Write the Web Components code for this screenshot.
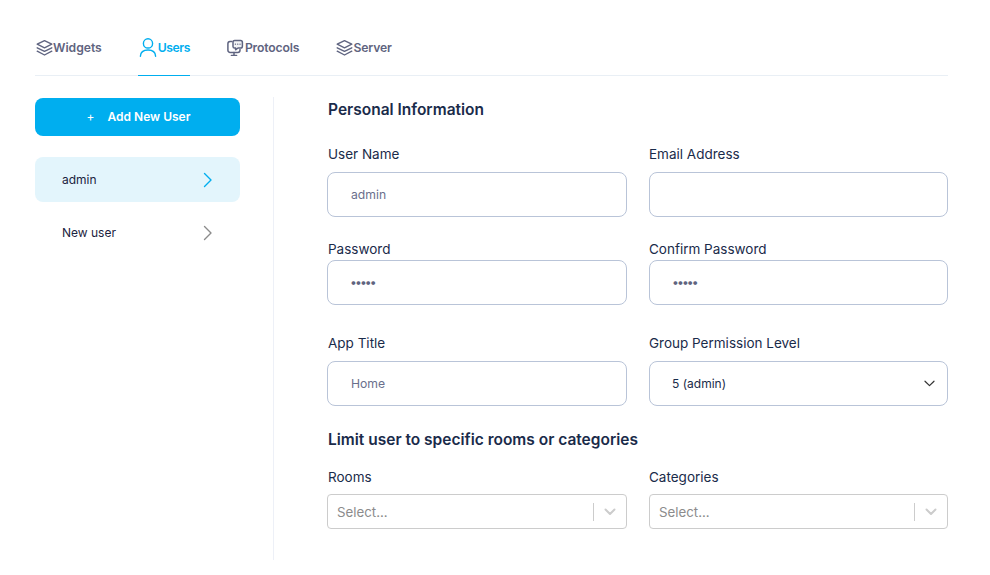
<!DOCTYPE html>
<html><head><meta charset="utf-8"><style>
html,body{margin:0;padding:0;background:#fff;}
body{font-family:Inter,"Liberation Sans",sans-serif;width:990px;height:575px;overflow:hidden;}
</style></head><body>
<settings-page></settings-page>
<script>
const ICONS={
stack:'<svg width="17" height="18" viewBox="0 0 17 18" fill="none" stroke="currentColor" stroke-width="1.4" stroke-linejoin="round" stroke-linecap="round"><path d="M8.5 2.6 15.8 6.2 8.5 9.8 1.2 6.2Z"/><path d="M1.2 9.8 8.5 13.4 15.8 9.8"/><path d="M1.2 13.2 8.5 17 15.8 13.2"/></svg>',
user:'<svg width="19" height="20" viewBox="0 0 19 20" fill="none" stroke="currentColor" stroke-width="1.4" stroke-linecap="round"><circle cx="9" cy="6.4" r="4.6"/><path d="M1.4 19.2C1.6 15 4.8 13 9 13S16.4 15 16.6 19.2"/></svg>',
proto:'<svg width="18" height="18" viewBox="0 0 18 18" fill="none" stroke="currentColor" stroke-width="1.5" stroke-linecap="round" stroke-linejoin="round"><path d="M5 3.6H3A2.2 2.2 0 0 0 .9 5.8V12.2A2.2 2.2 0 0 0 3.1 14.4H10.8A2.2 2.2 0 0 0 13 12.2V11.4"/><path d="M7.6 2.6H13.6A1.8 1.8 0 0 1 15.4 4.4V8.2A1.8 1.8 0 0 1 13.6 10H11L8.6 11.8V10H7.6A1.6 1.6 0 0 1 6 8.4V4.2A1.6 1.6 0 0 1 7.6 2.6Z" fill="currentColor" fill-opacity=".08"/><path d="M7 14.6V17.2M4.4 17.4H9.6"/><path d="M8.4 6.2H8.5M10.7 6.2H10.8M13 6.2H13.1" stroke-width="1.3"/></svg>',
chev:'<svg width="9" height="16" viewBox="0 0 9 16" fill="none" stroke="currentColor" stroke-width="1.4" stroke-linecap="round" stroke-linejoin="round"><path d="M1.5 1.5 8 8 1.5 14.5"/></svg>'
};
function def(name,css,html){
  customElements.define(name,class extends HTMLElement{
    constructor(){super();const s=this.attachShadow({mode:'open'});
      s.innerHTML='<style>'+css+'</style>'+(typeof html==='function'?html(this):html);}
  });
}
def('tab-item',`:host{display:flex;align-items:center;height:57px;box-sizing:border-box;padding:0 0 1px 1px;color:#5f6480;font-size:12.2px;font-weight:600;letter-spacing:-.03px;margin-bottom:-1px}
:host([active]){color:#00aeef;box-shadow:inset 0 -1px 0 #00aeef;letter-spacing:-.45px}
:host([tighter]){letter-spacing:-.15px}
span{display:flex} b{font-weight:600;}`,
 el=>`<span>${ICONS[el.getAttribute('icon')]}</span><b><slot></slot></b>`);
def('tab-bar',`:host{display:flex;gap:36px;height:56px;border-bottom:1px solid #e9eff5;padding-top:19px;box-sizing:content-box}`,`<slot></slot>`);
def('add-button',`:host{display:flex;align-items:center;justify-content:center;gap:13px;height:38px;width:205px;box-sizing:border-box;padding:0 0 1px 2px;border-radius:8px;background:#00aeef;color:#fff;font-size:12px;font-weight:600}
i{font-style:normal;font-weight:400;font-size:12px}`,`<i>+</i><span><slot></slot></span>`);
def('user-row',`:host{display:flex;align-items:center;justify-content:space-between;height:45px;width:205px;box-sizing:border-box;padding:0 27px;border-radius:8px;font-size:12px;color:#1c2340;margin-bottom:8px}
:host([active]){background:#e3f5fc}
svg{display:block} span{display:flex;color:#8b8b8b;margin-right:1px} :host([active]) span{color:#00aeef}`,
 ()=>`<slot></slot><span>${ICONS.chev}</span>`);
def('form-field',`:host{display:block;font-size:13.5px;color:#1a2b4a}
label{display:block;line-height:17px;margin-bottom:9px;padding-left:var(--lp,0)}
:host([tight]) label{margin-bottom:2px}
.box{height:45px;box-sizing:border-box;border:1px solid #b9c4d8;border-radius:8px;display:flex;align-items:center;padding:0 12px 0 23px;font-size:12.2px;color:#6a6f8c;justify-content:space-between}
:host([kind=sel]) .box{color:#1a2b4a;font-size:12px;padding-left:22px}
:host([kind=pw]) .box{letter-spacing:-1.9px;color:#5f6480;padding-left:22px}
svg{display:block}`,
 el=>`<label>${el.getAttribute('label')}</label><div class="box"><span><slot></slot></span>${el.getAttribute('kind')==='sel'?'<svg width="11" height="7" viewBox="0 0 11 7" fill="none" stroke="#333" stroke-width="1.2" stroke-linecap="round" stroke-linejoin="round"><path d="M1 1.2 5.5 5.6 10 1.2"/></svg>':''}</div>`);
def('multi-select',`:host{display:block;font-size:13.5px;color:#1a2b4a}
label{display:block;line-height:17px;margin-bottom:8px;padding-left:var(--lp,0)}
.box{height:35px;box-sizing:border-box;border:1px solid #ccc;border-radius:4px;display:flex;align-items:center;padding:0 10px 0 9px;font-size:13.3px;color:#8c8c8c}
.t{flex:1}
.d{width:1px;height:18px;background:#ccc;margin-right:10px}
svg{display:block}`,
 el=>`<label>${el.getAttribute('label')}</label><div class="box"><span class="t">Select...</span><span class="d"></span><svg width="12" height="8" viewBox="0 0 12 8" fill="none" stroke="#cccccc" stroke-width="2" stroke-linecap="round" stroke-linejoin="round"><path d="M1.5 1.5 6 6 10.5 1.5"/></svg></div>`);
def('section-title',`:host{display:block;font-size:15.5px;font-weight:600;color:#1a2b4a;line-height:20px;padding-left:1px}`,`<slot></slot>`);
def('settings-page',`:host{display:block;padding:0 42px 0 35px;width:990px;box-sizing:border-box;height:575px}
.main{display:flex;margin-top:21px}
aside{width:239px;height:463px;border-right:1px solid #edf0f7;flex:none;padding-top:1px;box-sizing:border-box}
.list{margin-top:21px}
section{margin-left:53px;flex:1;padding-top:3px}
.g{display:grid;grid-template-columns:300px 299px;column-gap:22px}
.g>:first-child{--lp:1px}
.r1{margin-top:26px}.r2{margin-top:24px}.r3{margin-top:30px}
.h2{margin-top:24px}.r4{margin-top:19px}`,
`<tab-bar>
  <tab-item icon="stack">Widgets</tab-item>
  <tab-item icon="user" active>Users</tab-item>
  <tab-item icon="proto" tighter>Protocols</tab-item>
  <tab-item icon="stack" tighter>Server</tab-item>
</tab-bar>
<div class="main">
  <aside>
    <add-button>Add New User</add-button>
    <div class="list"><user-row active>admin</user-row><user-row>New user</user-row></div>
  </aside>
  <section>
    <section-title>Personal Information</section-title>
    <div class="g r1"><form-field label="User Name">admin</form-field><form-field label="Email Address"></form-field></div>
    <div class="g r2"><form-field tight label="Password" kind="pw">•••••</form-field><form-field tight label="Confirm Password" kind="pw">•••••</form-field></div>
    <div class="g r3"><form-field label="App Title">Home</form-field><form-field label="Group Permission Level" kind="sel">5 (admin)</form-field></div>
    <section-title class="h2">Limit user to specific rooms or categories</section-title>
    <div class="g r4"><multi-select label="Rooms"></multi-select><multi-select label="Categories"></multi-select></div>
  </section>
</div>`);
</script>
</body></html>
